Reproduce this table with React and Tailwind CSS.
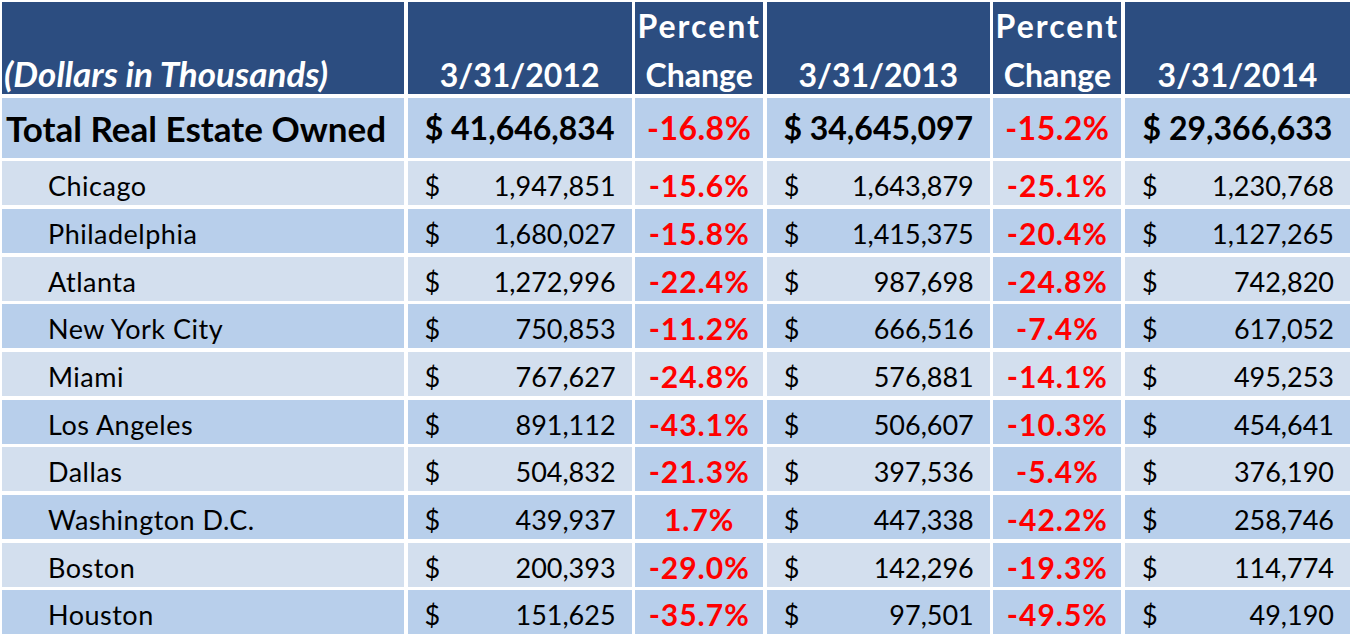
import React from 'react'

const rows = [
  ['Chicago', '1,947,851', '-15.6%', '1,643,879', '-25.1%', '1,230,768', false],
  ['Philadelphia', '1,680,027', '-15.8%', '1,415,375', '-20.4%', '1,127,265', true],
  ['Atlanta', '1,272,996', '-22.4%', '987,698', '-24.8%', '742,820', true],
  ['New York City', '750,853', '-11.2%', '666,516', '-7.4%', '617,052', true],
  ['Miami', '767,627', '-24.8%', '576,881', '-14.1%', '495,253', false],
  ['Los Angeles', '891,112', '-43.1%', '506,607', '-10.3%', '454,641', true],
  ['Dallas', '504,832', '-21.3%', '397,536', '-5.4%', '376,190', true],
  ['Washington D.C.', '439,937', '1.7%', '447,338', '-42.2%', '258,746', true],
  ['Boston', '200,393', '-29.0%', '142,296', '-19.3%', '114,774', true],
  ['Houston', '151,625', '-35.7%', '97,501', '-49.5%', '49,190', true],
]

const font = { fontFamily: 'Lato, "Open Sans", sans-serif' }

function Money({ value, bg }) {
  return (
    <div className={`${bg} flex items-end justify-between pl-[17px] pr-[16px] pb-[3px] text-[27px] leading-[32px] text-black`}>
      <span>$</span>
      <span>{value}</span>
    </div>
  )
}

function Pct({ value, bg }) {
  return (
    <div className={`${bg} flex items-end justify-center pb-[3px] text-[30px] leading-[34px] tracking-[1px] font-bold text-[#ff0000]`}>
      {value}
    </div>
  )
}

function PctHead() {
  return (
    <div className="bg-[#2c4d80] text-white font-bold text-[32px] leading-[38px] flex flex-col items-center justify-end">
      <span className="mb-[11px] tracking-[2px]">Percent</span>
      <span>Change</span>
    </div>
  )
}

export default function App() {
  const head = 'bg-[#2c4d80] text-white font-bold text-[32px] leading-[38px] flex items-end justify-center'
  const total = 'bg-[#b8cfeb] flex items-end justify-center pb-[12px] text-[32px] leading-[36px] font-bold'
  return (
    <div className="min-h-screen bg-white pl-[2px] pt-[2px]" style={font}>
      <div className="grid grid-cols-[402px_224px_128px_223px_128px_225px] grid-rows-[92px_60px_repeat(10,44px)] gap-x-[3.6px] gap-y-[3.67px]">
        <div className="bg-[#2c4d80] text-white font-bold italic text-[35px] leading-[42px] flex items-end pl-[2px]">
          (Dollars in Thousands)
        </div>
        <div className={head}>3/31/2012</div>
        <PctHead />
        <div className={head}>3/31/2013</div>
        <PctHead />
        <div className={head}>3/31/2014</div>

        <div className="bg-[#b8cfeb] flex items-end pl-[4px] pb-[12px] text-[35px] leading-[36px] font-bold">
          Total Real Estate Owned
        </div>
        <div className={total}>$ 41,646,834</div>
        <div className={`${total} text-[#ff0000] tracking-[0.5px]`}>-16.8%</div>
        <div className={total}>$ 34,645,097</div>
        <div className={`${total} text-[#ff0000] tracking-[0.5px]`}>-15.2%</div>
        <div className={total}>$ 29,366,633</div>

        {rows.map(([city, a, pa, b, pb, c, pctDark], i) => {
          const bg = i % 2 === 0 ? 'bg-[#d3dfee]' : 'bg-[#b8cfeb]'
          const pbg = pctDark ? 'bg-[#b8cfeb]' : 'bg-[#d3dfee]'
          return (
            <React.Fragment key={city}>
              <div className={`${bg} flex items-end pl-[46px] pb-[3px] text-[27px] leading-[32px] tracking-[0.5px] text-black`}>
                {city}
              </div>
              <Money value={a} bg={bg} />
              <Pct value={pa} bg={pbg} />
              <Money value={b} bg={bg} />
              <Pct value={pb} bg={pbg} />
              <Money value={c} bg={bg} />
            </React.Fragment>
          )
        })}
      </div>
    </div>
  )
}
